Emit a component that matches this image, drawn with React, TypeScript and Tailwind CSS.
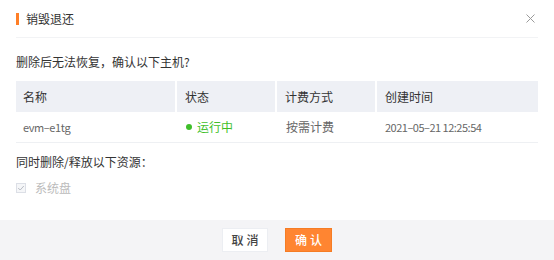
import React from "react";

const font = { fontFamily: '"Noto Sans CJK SC", "Liberation Sans", sans-serif' };

export default function App() {
  return (
    <div
      className="w-[554px] h-[260px] bg-white flex flex-col text-[12px] text-[#333]"
      style={font}
    >
      {/* header */}
      <div className="px-4">
        <div className="h-[38px] border-b border-[#f2f3f5] flex items-center">
          <div className="w-[3px] h-[12px] bg-[#ff7f27]" />
          <div className="ml-[7px] text-[12px] text-[#333] leading-none">销毁退还</div>
          <div className="flex-1" />
          <svg width="9" height="9" viewBox="0 0 9 9" className="mr-[3px]">
            <path d="M0.5 0.5 L8.5 8.5 M8.5 0.5 L0.5 8.5" stroke="#9a9a9a" strokeWidth="1" />
          </svg>
        </div>
      </div>

      <div className="px-4">
        <div className="mt-[14px] h-[20px] leading-[20px] text-[#333]">删除后无法恢复，确认以下主机?</div>

        {/* table */}
        <div className="mt-[9px] w-[522px]">
          <div className="grid grid-cols-[161px_100px_100px_161px] h-[31px] bg-[#eef0f5]">
            <div className="flex items-center pl-[7px] border-r-2 border-white">名称</div>
            <div className="flex items-center pl-[8px] border-r-2 border-white">状态</div>
            <div className="flex items-center pl-[8px] border-r-2 border-white">计费方式</div>
            <div className="flex items-center pl-[8px]">创建时间</div>
          </div>
          <div className="grid grid-cols-[161px_100px_100px_161px] h-[31px] border-b border-[#eef0f3] text-[#666]">
            <div className="flex items-center pl-[7px] text-[11px] tracking-[-0.4px]">evm–e1tg</div>
            <div className="flex items-center pl-[9px]">
              <span className="w-[6px] h-[6px] rounded-full bg-[#3fbf2a]" />
              <span className="ml-[5px] text-[#3fbf2a]">运行中</span>
            </div>
            <div className="flex items-center pl-[9px]">按需计费</div>
            <div className="flex items-center pl-[8px] text-[11px] tracking-[-0.5px]">2021–05–21 12:25:54</div>
          </div>
        </div>

        <div className="mt-[9px] h-[20px] leading-[20px] text-[#333]">同时删除/释放以下资源：</div>

        <div className="mt-[6px] h-[20px] flex items-center">
          <div className="w-[10px] h-[10px] border border-[#dcdfe6] bg-[#f5f6f8] flex items-center justify-center">
            <svg width="8" height="8" viewBox="0 0 8 8">
              <path d="M1.2 4 L3.2 6 L6.8 2" fill="none" stroke="#b8bcc4" strokeWidth="1" />
            </svg>
          </div>
          <span className="ml-[9px] text-[#bbbbbb]">系统盘</span>
        </div>
      </div>

      <div className="flex-1" />

      {/* footer */}
      <div className="h-[40px] bg-[#f4f4f6] flex items-center justify-center gap-[17px]">
        <button className="w-[46px] h-[24px] bg-white border border-[#eceef2] text-[#444] text-[12px] tracking-[3px] pl-[3px] font-medium">
          取消
        </button>
        <button className="w-[47px] h-[24px] bg-[#ff8531] border border-[#f57c24] text-white text-[12px] tracking-[3px] pl-[3px] font-medium">
          确认
        </button>
      </div>
    </div>
  );
}
